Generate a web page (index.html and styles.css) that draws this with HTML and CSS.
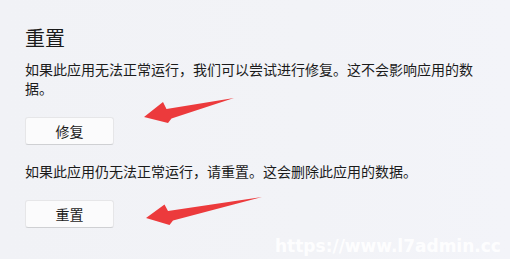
FILE: index.html
```html
<!DOCTYPE html>
<html lang="zh-CN">
<head>
<meta charset="utf-8">
<title>重置</title>
<link rel="stylesheet" href="styles.css">
</head>
<body>
<main class="page">
  <h2 class="title">重置</h2>
  <p class="desc">如果此应用无法正常运行，我们可以尝试进行修复。这不会影响应用的数据。</p>
  <button class="btn" type="button">修复</button>
  <p class="desc desc-reset">如果此应用仍无法正常运行，请重置。这会删除此应用的数据。</p>
  <button class="btn" type="button">重置</button>
</main>
<svg class="arrows" width="510" height="259" viewBox="0 0 510 259" aria-hidden="true">
  <polygon points="144,117 163,102 166.5,109 234,98 171.5,118.5 168,123" fill="#ec3a3c"/>
  <polygon points="146,218 164.5,204.5 168,211 262,197 173,220.5 169.5,225" fill="#ec3a3c"/>
</svg>
<div class="watermark">https://www.l7admin.cc</div>
</body>
</html>
```
FILE: styles.css
```css
html, body {
  margin: 0;
  padding: 0;
}
body {
  width: 510px;
  height: 259px;
  overflow: hidden;
  position: relative;
  background: linear-gradient(90deg, #f1f2f6 0%, #f2f3f7 60%, #f3f4f9 100%);
  font-family: "Noto Sans CJK SC", "Noto Sans", sans-serif;
  color: #1b1b1b;
}
.page {
  display: flex;
  flex-direction: column;
  align-items: flex-start;
  padding: 24px 30px 0 25px;
}
.title {
  margin: 0;
  font-size: 20px;
  line-height: 28px;
  font-weight: normal;
  color: #1a1a1a;
}
.desc {
  margin: 8px 0 0;
  width: 455px;
  font-size: 14px;
  line-height: 19px;
}
.desc-reset {
  margin-top: 17px;
}
.btn {
  margin-top: 19px;
  width: 89px;
  height: 28px;
  box-sizing: border-box;
  padding: 0;
  background: #fbfbfc;
  border: 1px solid #e6e6e8;
  border-bottom-color: #cfd0d3;
  border-radius: 3px;
  font-family: "Noto Sans CJK SC", "Noto Sans", sans-serif;
  font-size: 14px;
  line-height: 26px;
  color: #1b1b1b;
}
.arrows {
  position: absolute;
  top: 0;
  left: 0;
  pointer-events: none;
}
.watermark {
  position: absolute;
  left: 275px;
  top: 236px;
  font-family: "DejaVu Sans", sans-serif;
  font-weight: bold;
  font-size: 17px;
  line-height: 20px;
  letter-spacing: 0;
  color: rgba(255, 255, 255, 0.92);
  white-space: nowrap;
}
```
